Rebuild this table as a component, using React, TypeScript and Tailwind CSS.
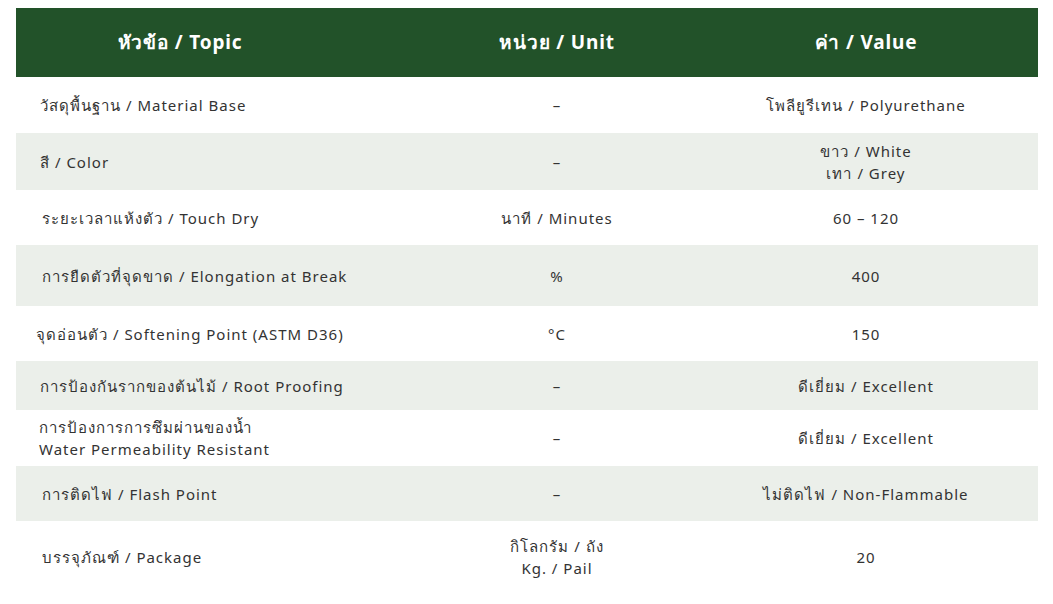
const rows: { topic: string[]; unit: string[]; value: string[]; h: string; pl: string; bg: string }[] = [
  { topic: ["วัสดุพื้นฐาน / Material Base"], unit: ["–"], value: ["โพลียูรีเทน / Polyurethane"], h: "h-[56px]", pl: "pl-6", bg: "bg-white" },
  { topic: ["สี / Color"], unit: ["–"], value: ["ขาว / White", "เทา / Grey"], h: "h-[57px]", pl: "pl-6", bg: "bg-[#ebefea]" },
  { topic: ["ระยะเวลาแห้งตัว / Touch Dry"], unit: ["นาที / Minutes"], value: ["60 – 120"], h: "h-[55px]", pl: "pl-[26px]", bg: "bg-white" },
  { topic: ["การยืดตัวที่จุดขาด / Elongation at Break"], unit: ["%"], value: ["400"], h: "h-[61px]", pl: "pl-[26px]", bg: "bg-[#ebefea]" },
  { topic: ["จุดอ่อนตัว / Softening Point (ASTM D36)"], unit: ["°C"], value: ["150"], h: "h-[55px]", pl: "pl-5", bg: "bg-white" },
  { topic: ["การป้องกันรากของต้นไม้ / Root Proofing"], unit: ["–"], value: ["ดีเยี่ยม / Excellent"], h: "h-[49px]", pl: "pl-6", bg: "bg-[#ebefea]" },
  { topic: ["การป้องการการซึมผ่านของน้ำ", "Water Permeability Resistant"], unit: ["–"], value: ["ดีเยี่ยม / Excellent"], h: "h-[56px]", pl: "pl-[23px]", bg: "bg-white" },
  { topic: ["การติดไฟ / Flash Point"], unit: ["–"], value: ["ไม่ติดไฟ / Non-Flammable"], h: "h-[55px]", pl: "pl-[26px]", bg: "bg-[#ebefea]" },
  { topic: ["บรรจุภัณฑ์ / Package"], unit: ["กิโลกรัม / ถัง", "Kg. / Pail"], value: ["20"], h: "h-[71px]", pl: "pl-[26px]", bg: "bg-white" },
];

function Lines({ lines, center }: { lines: string[]; center?: boolean }) {
  return (
    <div className={`leading-[22px] whitespace-nowrap ${center ? "text-center" : ""}`}>
      {lines.map((l, i) => (
        <div key={i}>{l}</div>
      ))}
    </div>
  );
}

const cols = "grid grid-cols-[328px_426px_192px_76px]";

export default function App() {
  return (
    <div className="min-h-screen bg-white pt-2 px-4 font-['Noto_Sans','DejaVu_Sans',sans-serif]">
      <div className="w-[1022px]">
        <div className={`${cols} h-[69px] bg-[#225229] text-white font-bold text-[19px] tracking-[0.85px] items-center`}>
          <div className="flex justify-center whitespace-nowrap">หัวข้อ / Topic</div>
          <div className="flex justify-center whitespace-nowrap">หน่วย / Unit</div>
          <div className="flex justify-center whitespace-nowrap">ค่า / Value</div>
          <div />
        </div>
        {rows.map((r, i) => (
          <div
            key={i}
            className={`${cols} items-center text-[15px] text-[#333333] tracking-[1px] ${r.h} ${r.bg}`}
          >
            <div className={r.pl}>
              <Lines lines={r.topic} />
            </div>
            <div className="flex justify-center">
              <Lines lines={r.unit} center />
            </div>
            <div className="flex justify-center">
              <Lines lines={r.value} center />
            </div>
            <div />
          </div>
        ))}
      </div>
    </div>
  );
}
